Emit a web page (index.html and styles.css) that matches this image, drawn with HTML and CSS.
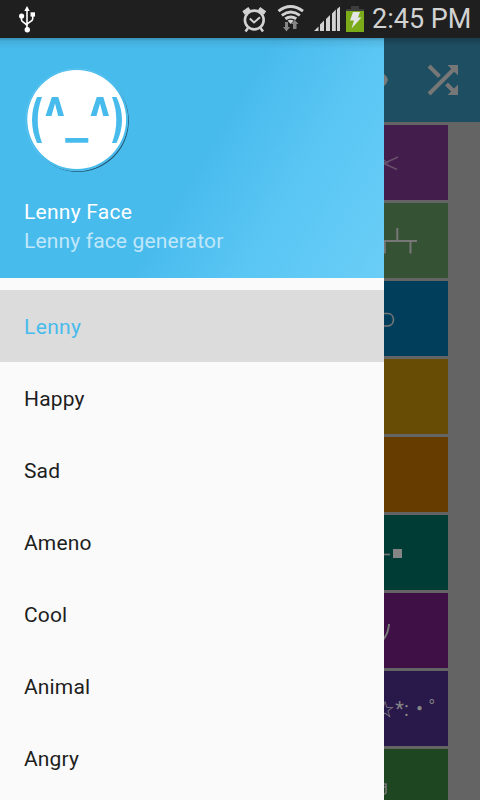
FILE: index.html
```html
<!DOCTYPE html>
<html lang="en">
<head>
<meta charset="utf-8">
<title>Lenny Face</title>
<link rel="stylesheet" href="styles.css">
</head>
<body>
<header class="status">
  <svg class="usb" width="18" height="28" viewBox="0 0 18 28" fill="none" stroke="#fff" stroke-width="1.6">
    <path d="M9 5v20M3.500 10v4c0 2.500 5.500 3 5.500 6M14.700 8v5c0 3-5.700 3-5.700 6"/>
    <path d="M9 0l2.700 5H6.300z" fill="#fff" stroke="none"/>
    <circle cx="3.600" cy="10" r="2.600" fill="#fff" stroke="none"/>
    <path d="M12.500 6.300h4.500v4.300h-4.500z" fill="#fff" stroke="none"/>
    <circle cx="9.300" cy="23.800" r="2.700" fill="#fff" stroke="none"/>
  </svg>
  <svg class="tray" width="130" height="38" viewBox="0 0 130 38" fill="none" stroke="#d2d2d2">
    <circle cx="14.300" cy="20" r="9.400" stroke-width="2.600"/>
    <path d="M9.800 18.500l4.200 4 6-5.300" stroke-width="2"/>
    <path d="M3.500 13l6-4.300M19 8.700l6 4.300" stroke-width="4"/>
    <path d="M8 28l-2.500 3.500M20.500 28l2.500 3.500" stroke-width="2.500"/>
    <path d="M38.500 11.200q12-9.500 24.500 0M41.800 15.300q9-6.600 18 0M45.300 18.800q5.500-3.800 11 0" stroke-width="2.900"/>
    <path d="M47.500 20.500q3.200-1.600 6.200 0L50.600 24z" fill="#d2d2d2" stroke="none"/>
    <path d="M45 22h3v5h2l-3.500 4.500L43 27h2zM53 29v-5h-2l3.800-4 3.700 4h-2v5z" fill="#858585" stroke="none"/>
    <path d="M74 31l4.500-4.500V31zM80 24.500l4-4V31h-4zM86 19l4-4V31h-4zM92 13.500l3.800-4V31H92zM97 9l3-2.500V31h-3z" fill="#d2d2d2" stroke="none"/>
    <path d="M111 6h8v3h-8zM106 9h18v2.500h-18z" fill="#3d3d3d" stroke="none"/>
    <path d="M106 11h18v21h-18z" fill="#7bab18" stroke="none"/>
    <path d="M113 12h7l-2 5.500h3.500L111.500 28.500l2.500-8h-4z" fill="#e4e4e4" stroke="none"/>
  </svg>
  <span class="clock">2:45 PM</span>
</header>
<main class="screen">
  <aside class="drawer">
    <div class="profile">
      <svg class="avatar" width="108" height="108" viewBox="0 0 108 108">
        <circle cx="54" cy="54" r="50.800" fill="#235873"/>
        <circle cx="52.800" cy="52.800" r="51.300" fill="#63c6f0"/>
        <circle cx="53" cy="53" r="50.800" fill="#48bbed"/>
        <circle cx="52.700" cy="52.500" r="49.400" fill="#fff"/>
        <g fill="#48bbed">
          <path d="M13 30h5q-8.600 23 0 46h-5q-10-23 0-46zM88 30h4.500q11 23 0 46H88q8.600-23 0-46z"/>
          <path d="M21.500 49l6.300-19h6.500L40 49h-5.800L31 36.500 27.500 49zM66.500 49l6.300-19h6.500L85 49h-5.800L76 36.500 72.500 49zM41.300 71h23v4.700h-23z"/>
        </g>
      </svg>
      <div class="name">Lenny Face</div>
      <div class="subtitle">Lenny face generator</div>
    </div>
    <nav class="menu">
      <a class="item selected">Lenny</a>
      <a class="item">Happy</a>
      <a class="item">Sad</a>
      <a class="item">Ameno</a>
      <a class="item">Cool</a>
      <a class="item">Animal</a>
      <a class="item">Angry</a>
    </nav>
  </aside>
  <section class="content">
    <div class="toolbar">
      <svg width="96" height="84" viewBox="0 0 96 84">
        <path d="M0 36q3 2 4 6-1 4-4 6z" fill="#777"/>
        <path d="M45 28l10.500 10.500M45 56l27-27M62.500 46l9 9" fill="none" stroke="#777" stroke-width="4"/>
        <path d="M63.500 27H74v10.500zM74 46.500V57H63.500z" fill="#777"/>
      </svg>
    </div>
    <div class="cards">
      <div class="card violet"><svg width="64" height="75" viewBox="0 0 64 75"><path d="M14 32L0 38.500l13 6M0 35l4 3.500" stroke="#66506a" /></svg></div>
      <div class="card sage"><svg width="64" height="75" viewBox="0 0 64 75"><path d="M0 38h33M13.300 25v13M.8 38v12.500M26.500 38v12.500" stroke-width="2"/></svg></div>
      <div class="card blue"><svg width="64" height="75" viewBox="0 0 64 75"><path d="M0 32.500h3.500c8 0 8 12.500 0 12.500H0"/></svg></div>
      <div class="card gold"></div>
      <div class="card orange"></div>
      <div class="card teal"><svg width="64" height="75" viewBox="0 0 64 75"><path d="M0 39.500h6"/><path d="M9 34h9v9H9z" fill="#858585" stroke="none"/></svg></div>
      <div class="card plum"><svg width="64" height="75" viewBox="0 0 64 75"><path d="M5 31q-.5 9-6 16" stroke-width="2"/></svg></div>
      <div class="card indigo"><span class="face"><i class="star">☆</i><i>*</i><i>:</i><i>・</i><i>゜</i></span></div>
      <div class="card green"><svg width="64" height="75" viewBox="0 0 64 75"><path d="M0 35h2v8q0 2-2 2M0 38h2"/></svg></div>
    </div>
  </section>
</main>
</body>
</html>
```
FILE: styles.css
```css
* { box-sizing: border-box; }
body {
  margin: 0;
  width: 480px;
  height: 800px;
  overflow: hidden;
  font-family: Roboto, "Noto Sans CJK JP", sans-serif;
  background: #646464;
}
.status {
  height: 38px;
  display: flex;
  background: #1f1f1f;
}
.usb { margin: 6px 0 0 18px; }
.tray { margin-left: 204px; flex: none; }
.clock {
  margin-left: 2px;
  color: #d2d2d2;
  font-size: 27px;
  line-height: 38px;
  white-space: nowrap;
}
.screen { display: flex; height: 762px; }
.drawer { width: 384px; flex: none; background: #fafafa; }
.profile {
  height: 240px;
  padding: 29px 24px 0;
  background:
    linear-gradient(rgba(0, 0, 0, 0.24), rgba(0, 0, 0, 0.08) 3px, rgba(0, 0, 0, 0) 11px),
    linear-gradient(121deg, #48bbed 52%, #5ac6f4 73%, #6acef7 100%);
}
.avatar { display: block; }
.name, .subtitle, .item {
  font-size: 21px;
  letter-spacing: 0.15px;
  white-space: nowrap;
}
.name { margin-top: 23px; line-height: 29px; color: #fff; letter-spacing: 0.25px; }
.subtitle { line-height: 29px; color: #c0e7f9; }
.menu { padding-top: 12px; }
.item {
  display: block;
  height: 72px;
  padding-left: 24px;
  line-height: 75px;
  color: #1e1e1e;
}
.selected { background: #dcdcdc; color: #48bbed; letter-spacing: 0.35px; }
.content { width: 96px; overflow: hidden; }
.toolbar {
  height: 84px;
  background: linear-gradient(#193d4d, #1d4e61 8px);
}
.toolbar svg, .card svg { display: block; }
.cards {
  display: flex;
  flex-direction: column;
  gap: 3px;
  padding-top: 3px;
}
.card { width: 64px; height: 75px; flex: none; overflow: hidden; }
.card svg { fill: none; stroke: #777; stroke-width: 1.6; }
.violet { background: #431d4c; }
.sage { background: #355235; }
.blue { background: #003e5c; }
.gold { background: #664c04; }
.orange { background: #663c00; }
.teal { background: #003c36; }
.plum { background: #3e1046; }
.indigo { background: #29184a; }
.green { background: #1e4620; }
.face {
  display: grid;
  grid-template-columns: 11px 9px 5px 21px 18px;
  justify-items: center;
  line-height: 77px;
  color: #858585;
  font-size: 20px;
}
.face i { font-style: normal; }
.face .star { justify-self: end; margin-right: 1px; font-size: 18px; }
```
